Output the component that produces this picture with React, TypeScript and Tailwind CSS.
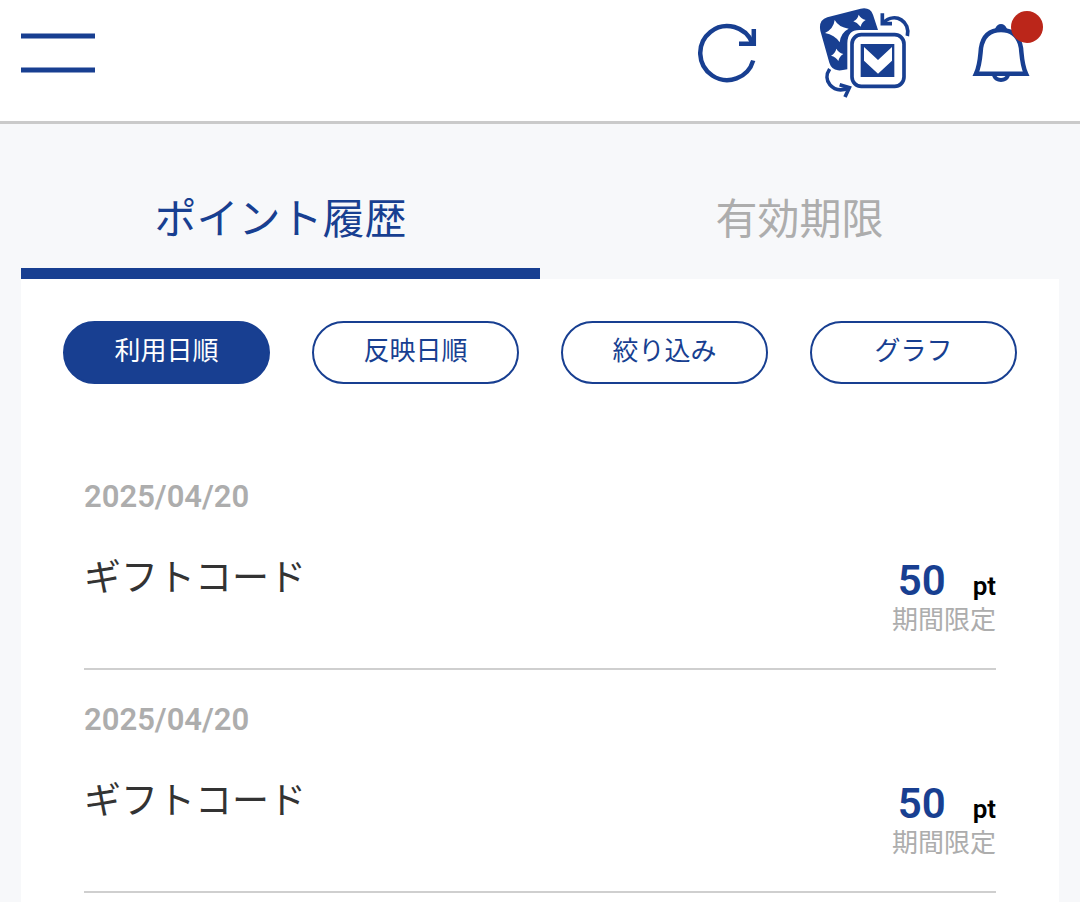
const historico = [
  { id: 1, date: '2025/04/20', title: 'ギフトコード', points: 50, note: '期間限定' },
  { id: 2, date: '2025/04/20', title: 'ギフトコード', points: 50, note: '期間限定' },
]

export default function App() {
  return (
    <div className="min-h-screen flex flex-col bg-[#f7f8fa] font-[Roboto,'Noto_Sans_CJK_JP',sans-serif]">

      {/* Header */}
      <header className="flex items-center justify-between h-[124px] pl-[21px] pr-9 bg-white border-b-3 border-[#cacaca]">
        <button aria-label="メニュー" className="mb-4">
          <MenuIcon />
        </button>

        <div className="flex items-center gap-[61px] mb-4">
          <button aria-label="更新">
            <RefreshIcon />
          </button>
          <button aria-label="ポイント交換">
            <ExchangeIcon />
          </button>
          <button aria-label="お知らせ">
            <BellIcon />
          </button>
        </div>
      </header>

      <main className="flex-1 flex flex-col px-[21px] pt-[63px]">

        {/* Tabs */}
        <div role="tablist" className="flex">
          <Tab label="ポイント履歴" active />
          <Tab label="有効期限" />
        </div>

        <section className="flex-1 bg-white pt-[42px]">

          {/* Filters */}
          <div className="grid grid-cols-4 gap-[42px] px-[42px] mb-[63px]">
            <Pill label="利用日順" active />
            <Pill label="反映日順" />
            <Pill label="絞り込み" />
            <Pill label="グラフ" />
          </div>

          {/* History */}
          <ul className="px-[63px]">
            {historico.map((item) => (
              <HistoryItem key={item.id} {...item} />
            ))}
          </ul>
        </section>

      </main>
    </div>
  )
}

function Tab({ label, active }: { label: string; active?: boolean }) {
  return (
    <button
      role="tab"
      aria-selected={!!active}
      className={`flex-1 h-[92px] pb-4 text-[42px] leading-[60px] border-b-11 ${
        active ? 'text-[#183f91] border-[#183f91]' : 'text-[#adadad] border-transparent'
      }`}
    >
      {label}
    </button>
  )
}

function Pill({ label, active }: { label: string; active?: boolean }) {
  return (
    <button
      className={`h-[63px] pb-1 rounded-full border-2 border-[#183f91] text-[26px] leading-[38px] ${
        active ? 'bg-[#183f91] text-white' : 'bg-white text-[#183f91]'
      }`}
    >
      {label}
    </button>
  )
}

function HistoryItem({ date, title, points, note }: any) {
  return (
    <li className="pt-7 pb-[30px] border-b-2 border-[#cfcfcf]">
      <p className="text-[31px] leading-[44px] font-semibold text-[#adadad]">{date}</p>
      <div className="flex justify-between mt-[41px]">
        <h2 className="text-[37px] leading-[38px] text-[#333]">{title}</h2>
        <div className="flex flex-col items-end">
          <p className="flex items-baseline gap-[27px] font-semibold">
            <span className="text-[42px] leading-[42px] text-[#183f91]">{points}</span>
            <span className="text-[26px] leading-[26px] text-black">pt</span>
          </p>
          <p className="text-[26px] leading-[36px] text-[#adadad]">{note}</p>
        </div>
      </div>
    </li>
  )
}

function MenuIcon() {
  return (
    <svg width="74" height="42" viewBox="0 0 74 42" stroke="#183f91" strokeWidth="5.2">
      <path d="M0 4h74M0 38h74" />
    </svg>
  )
}

function RefreshIcon() {
  return (
    <svg width="62" height="62" viewBox="696 22 62 62" fill="none" stroke="#183f91" strokeWidth="4.5">
      <path d="M753.2 60.5A27 27 0 1 1 752.5 43.5" />
      <path d="M739 43.8H753.8V29" />
    </svg>
  )
}

function ExchangeIcon() {
  return (
    <svg width="92" height="96" viewBox="27 15 276 288" fill="none">
      <path
        d="M31 92Q25 60 52 52L152 26Q180 20 189 44L204 90H148Q112 90 112 130V208Q94 212 84 211Q64 208 58 188Z"
        fill="#183f91"
      />
      <path d="M74 60Q86 82 116 86Q92 98 89 127Q74 104 45 99Q71 86 74 60Z" fill="#fff" />
      <path d="M146 44Q152 56 167 60Q155 67 152 80Q145 69 130 64Q143 58 146 44Z" fill="#fff" />
      <path d="M79 146Q85 158 100 162Q88 169 85 183Q78 171 63 167Q76 160 79 146Z" fill="#fff" />
      <rect x="126" y="104" width="156" height="155" rx="28" stroke="#183f91" strokeWidth="11" fill="#fff" />
      <path d="M152 132H253V231H152Z" fill="#183f91" />
      <path d="M162 141L204 180L246 141V182L204 221L162 182Z" fill="#fff" />
      <g stroke="#183f91" strokeWidth="11">
        <path d="M292 108C302 66 258 34 219 68" />
        <path d="M217 40V71H246" />
        <path d="M59 207C36 240 66 282 115 265" />
        <path d="M89 254L118 263L105 291" />
      </g>
    </svg>
  )
}

function BellIcon() {
  return (
    <svg width="72" height="98" viewBox="972 4 72 98" fill="none" stroke="#183f91" strokeWidth="4.5">
      <path d="M976 73.8H1026C1022 65 1022 58 1021 48C1019 36 1012 30 1001 30C990 30 983 36 981 48C980 58 980 65 976 73.8Z" />
      <path d="M995 29Q997 24 1001 24Q1005 24 1007 29Z" fill="#183f91" stroke="none" />
      <path d="M994 75.5Q996 80 1001 80Q1006 80 1008 75.5" strokeWidth="4" />
      <circle cx="1027" cy="27" r="16" fill="#bb261a" stroke="none" />
    </svg>
  )
}
